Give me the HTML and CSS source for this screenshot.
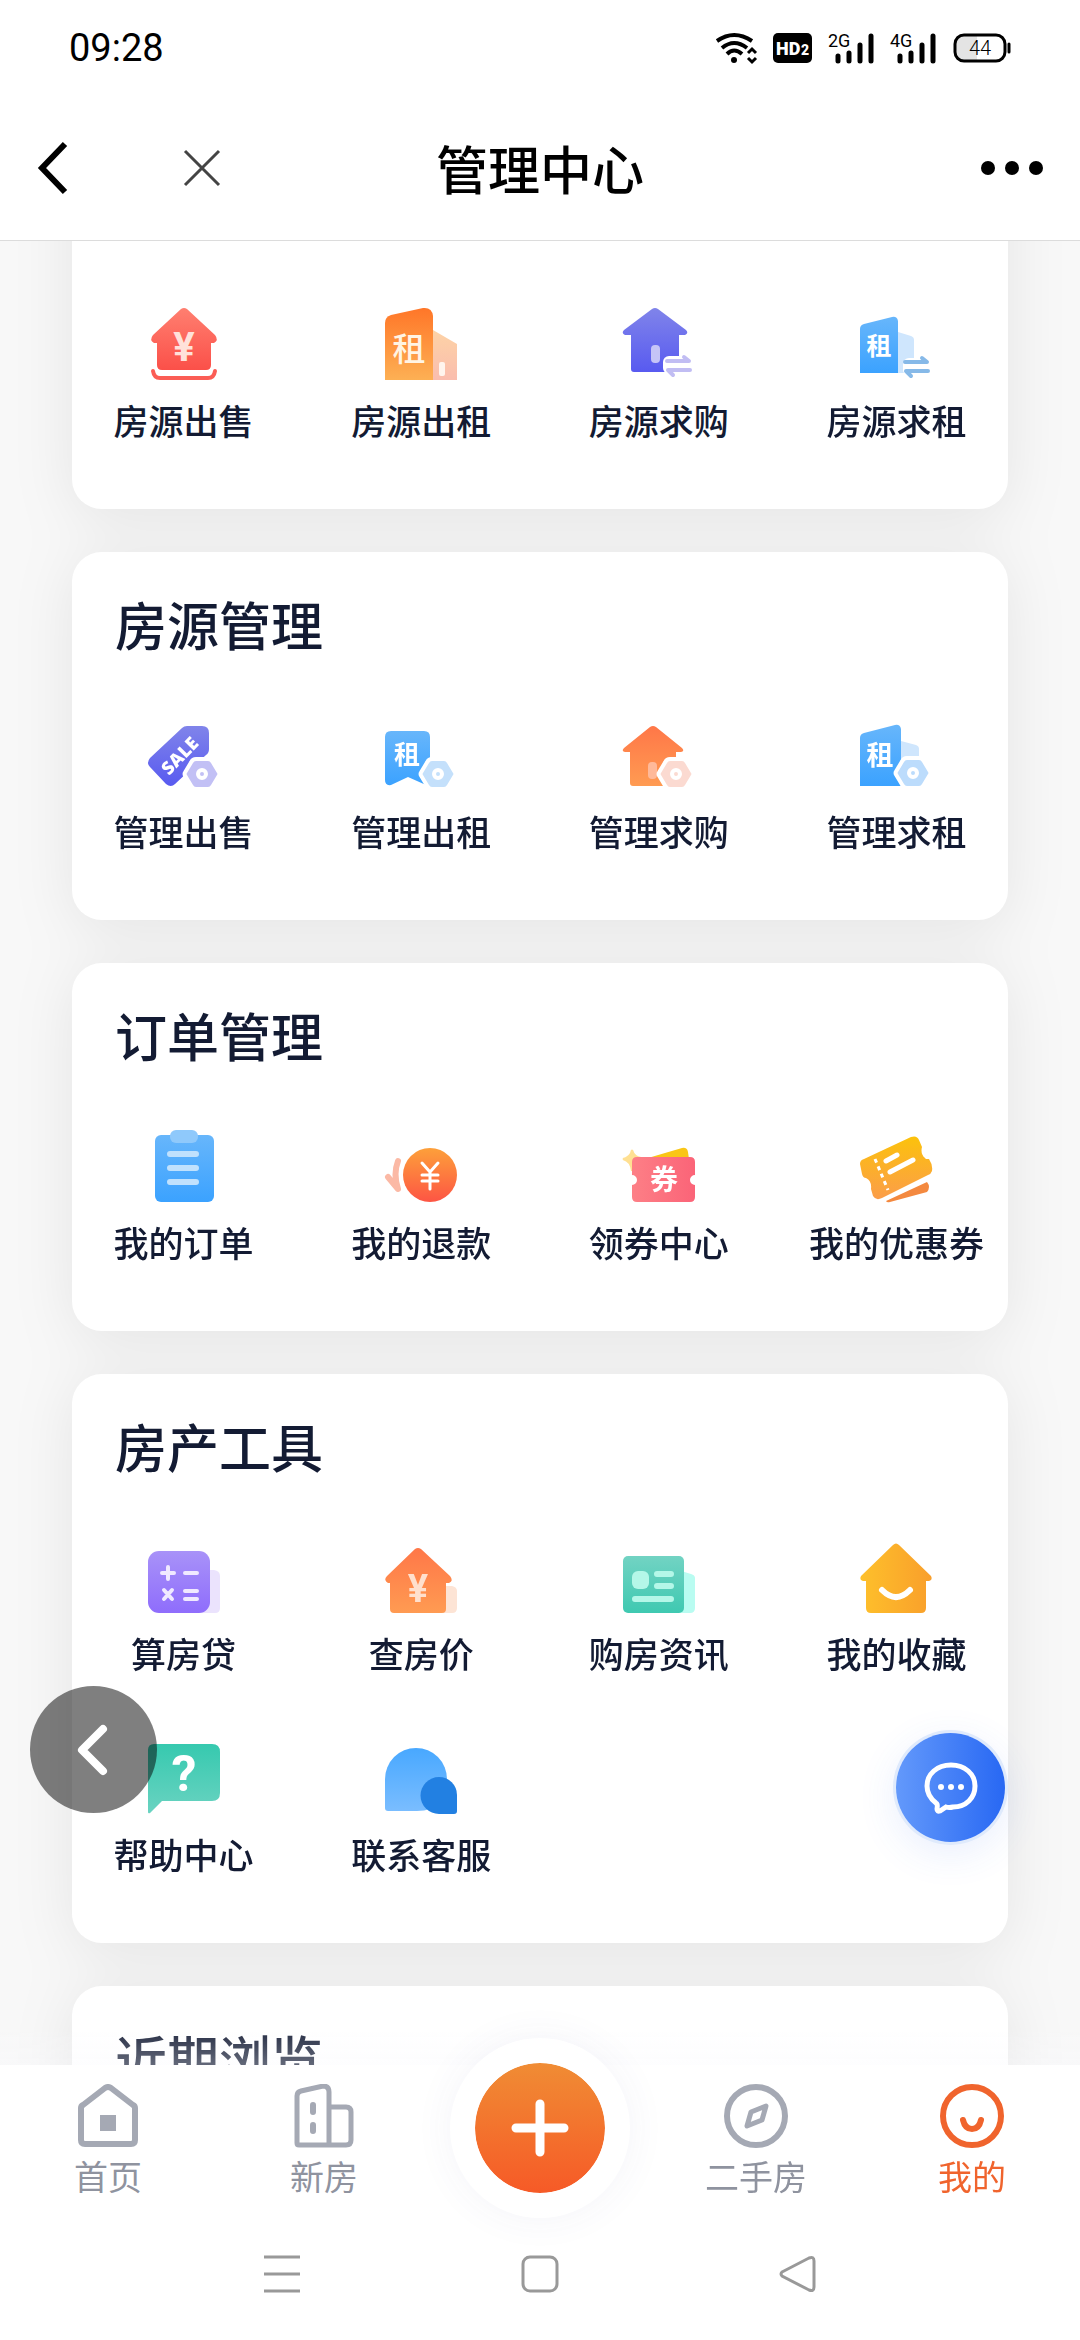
FILE: index.html
```html
<!DOCTYPE html>
<html lang="zh-CN">
<head>
  <meta charset="UTF-8">
  <title>管理中心</title>
  <meta name="viewport" content="width=device-width, initial-scale=1.0">
  <link rel="stylesheet" href="styles.css">
</head>
<body>
  <!-- Shared gradients and small icon parts -->
  <svg class="defs" aria-hidden="true">
    <defs>
      <linearGradient id="red" x2="0" y2="1"><stop stop-color="#ff7f70"/><stop offset="1" stop-color="#fb5049"/></linearGradient>
      <linearGradient id="orange" x2="0" y2="1"><stop stop-color="#ff7628"/><stop offset="1" stop-color="#fdb054"/></linearGradient>
      <linearGradient id="peach" x2="0" y2="1"><stop stop-color="#fdd3a6"/><stop offset="1" stop-color="#fabdae"/></linearGradient>
      <linearGradient id="coral" x2="0" y2="1"><stop stop-color="#ff7748"/><stop offset="1" stop-color="#ff9b52"/></linearGradient>
      <linearGradient id="coin" x2="0" y2="1"><stop stop-color="#fda03a"/><stop offset="1" stop-color="#fd5544"/></linearGradient>
      <linearGradient id="indigo" x2="0" y2="1"><stop stop-color="#8084ea"/><stop offset="1" stop-color="#585af0"/></linearGradient>
      <linearGradient id="blue" x2="0" y2="1"><stop stop-color="#67b6fb"/><stop offset="1" stop-color="#3ba2ff"/></linearGradient>
      <linearGradient id="sky" x2="0" y2="1"><stop stop-color="#48a8ff"/><stop offset="1" stop-color="#7abdff"/></linearGradient>
      <linearGradient id="violet" x2="0" y2="1"><stop stop-color="#a892f8"/><stop offset="1" stop-color="#8f6dfc"/></linearGradient>
      <linearGradient id="mint" x2="0" y2="1"><stop stop-color="#72d3c3"/><stop offset="1" stop-color="#3fc9b1"/></linearGradient>
      <linearGradient id="green" x2="0" y2="1"><stop stop-color="#36c9af"/><stop offset="1" stop-color="#6ad3c1"/></linearGradient>
      <linearGradient id="pink"><stop stop-color="#fd7f86"/><stop offset="1" stop-color="#fb6478"/></linearGradient>
      <linearGradient id="ticket" x2="0" y2="1"><stop stop-color="#fcc20b"/><stop offset="1" stop-color="#fb9d4a"/></linearGradient>
      <linearGradient id="amber"><stop stop-color="#fec02b"/><stop offset="1" stop-color="#f99f2b"/></linearGradient>
      <g id="swap">
        <path d="M2 8H24L19 4M25 17H3l5 5" fill="none" stroke-width="4" stroke-linecap="round" stroke-linejoin="round"/>
      </g>
      <g id="nut">
        <path d="M9 2h12q2 0 3 2l6 10q1 1 0 2l-6 10q-1 2-3 2H9q-2 0-3-2L0 16q-1-1 0-2L6 4q1-2 3-2z" stroke="#fff" stroke-width="8" paint-order="stroke"/>
        <circle cx="15" cy="15" r="4" stroke="#fff" stroke-width="4"/>
      </g>
    </defs>
  </svg>

  <div class="app">
    <div class="status-bar">
      <span class="time">09:28</span>
      <div class="status-icons">
        <svg width="40" height="30" viewBox="0 0 40 30">
          <g fill="none" stroke="#000" stroke-width="4">
            <path d="M1 8Q18-4 36 8"/><path d="M6 15Q18 5 31 15"/><path d="M11 21Q18 14 26 21"/>
            <path d="M32 20l4-4 4 4M32 25l4 4 4-4" stroke-width="3"/>
          </g>
          <circle cx="18" cy="27" r="3"/>
        </svg>
        <svg width="39" height="30" viewBox="0 0 39 30">
          <rect width="39" height="30" rx="5"/>
          <text x="3" y="22" font-size="18" class="hd">HD</text><text x="28" y="22" font-size="14" class="hd">2</text>
        </svg>
        <svg width="45" height="30" viewBox="0 0 45 30">
          <text x="-1" y="14" class="net">2G</text>
          <path d="M9 23v5M20 20v8M31 12v16M42 3v25" stroke="#000" stroke-width="5" stroke-linecap="round"/>
        </svg>
        <svg width="45" height="30" viewBox="0 0 45 30">
          <text x="-1" y="14" class="net">4G</text>
          <path d="M9 23v5M20 20v8M31 12v16M42 3v25" stroke="#000" stroke-width="5" stroke-linecap="round"/>
        </svg>
        <svg width="58" height="30" viewBox="0 0 58 30">
          <path d="M10 2h14v26H10q-8 0-8-8V10q0-8 8-8z" fill="#e4e4e4"/>
          <rect x="2" y="2" width="50" height="26" rx="9" fill="none" stroke="#000" stroke-width="3"/>
          <path d="M56 11v8" stroke="#000" stroke-width="3" stroke-linecap="round"/>
          <text x="27" y="22" text-anchor="middle" class="level">44</text>
        </svg>
      </div>
    </div>

    <header class="nav-bar">
      <div class="nav-left">
        <button type="button" aria-label="返回">
          <svg width="32" height="54" viewBox="0 0 32 54"><path d="M29 3L6 27l23 24" fill="none" stroke="#000" stroke-width="6"/></svg>
        </button>
        <button type="button" aria-label="关闭">
          <svg width="38" height="38" viewBox="0 0 38 38"><path d="M2 2l34 34M36 2L2 36" fill="none" stroke="#444" stroke-width="3"/></svg>
        </button>
      </div>
      <h1>管理中心</h1>
      <button type="button" class="more" aria-label="更多">
        <svg width="64" height="16" viewBox="0 0 64 16"><circle cx="8" cy="8" r="7"/><circle cx="32" cy="8" r="7"/><circle cx="56" cy="8" r="7"/></svg>
      </button>
    </header>

    <main class="feed" id="feed">
      <div class="cards">
        <section class="card">
          <h2>房源发布</h2>
          <div class="grid">
            <a href="#" class="item">
              <svg class="icon" viewBox="0 0 72 72">
                <path d="M33 1q3-2 6 0l28 26q4 5-1 8h-3v22q0 5-5 5H14q-5 0-5-5V35H6q-5-3-1-8z" fill="url(#red)"/>
                <path d="M5 63q1 7 7 7h48q6 0 7-7" fill="none" stroke="#fb5d55" stroke-width="4" stroke-linecap="round"/>
                <text x="36" y="53" font-size="40" class="yen" fill="#ffe1da">¥</text>
              </svg>
              <span>房源出售</span>
            </a>
            <a href="#" class="item">
              <svg class="icon" viewBox="0 0 72 72">
                <path d="M48 22l24 14v36H48z" fill="url(#peach)"/>
                <rect x="54" y="54" width="6" height="14" rx="2" fill="#fff5ee"/>
                <path d="M0 15q0-6 6-8l32-7q9-1 10 8v64H0z" fill="url(#orange)"/>
                <text x="24" y="53" font-size="33" class="zh" fill="#fff4e4">租</text>
              </svg>
              <span>房源出租</span>
            </a>
            <a href="#" class="item">
              <svg class="icon" viewBox="0 0 72 72">
                <path d="M29 1q3-2 6 0l28 21q3 3-1 5h-6v34q0 3-3 3H11q-3 0-3-3V27H2q-4-2-1-5z" fill="url(#indigo)"/>
                <rect x="28" y="37" width="9" height="18" rx="4" fill="#c5c4f7"/>
                <rect x="40" y="48" width="22" height="18" rx="6" fill="#fff"/>
                <use href="#swap" x="42" y="45" stroke="#c1bdf3"/>
              </svg>
              <span>房源求购</span>
            </a>
            <a href="#" class="item">
              <svg class="icon" viewBox="0 0 72 72">
                <path d="M38 24l13 4q3 1 3 4v33H38z" fill="#cfe6fd"/>
                <path d="M0 21q0-4 4-5l28-7q5-1 6 4v52H0z" fill="url(#blue)"/>
                <rect x="43" y="50" width="20" height="18" rx="6" fill="#fff"/>
                <use href="#swap" x="43" y="46" stroke="#86b9e8"/>
                <text x="19" y="47" font-size="25" class="zh bold" fill="#fff">租</text>
              </svg>
              <span>房源求租</span>
            </a>
          </div>
        </section>

        <section class="card">
          <h2>房源管理</h2>
          <div class="grid">
            <a href="#" class="item">
              <svg class="icon" viewBox="0 0 72 72">
                <path d="M34 9q2-2 5-2h15q7 0 7 7v16q0 4-3 6L27 65q-4 4-9 0L2 48q-4-4 0-9z" fill="url(#indigo)"/>
                <text x="32" y="43" font-size="18" class="sale" transform="rotate(-46 32 37)">SALE</text>
                <use href="#nut" x="39" y="40" fill="#c2c0f5"/>
              </svg>
              <span>管理出售</span>
            </a>
            <a href="#" class="item">
              <svg class="icon" viewBox="0 0 72 72">
                <path d="M6 12h33q6 0 6 6v46q0 4-4 2l-18-8-17 8q-6 1-6-5V18q0-6 6-6z" fill="url(#blue)"/>
                <text x="22" y="45" font-size="26" class="zh bold" fill="#fff">租</text>
                <use href="#nut" x="38" y="40" fill="#c4e0fb"/>
              </svg>
              <span>管理出租</span>
            </a>
            <a href="#" class="item">
              <svg class="icon" viewBox="0 0 72 72">
                <path d="M27 8q3-2 6 0l26 21q3 3-1 4h-5v31q0 3-3 3H10q-3 0-3-3V33H2q-4-1-1-4z" fill="url(#coral)"/>
                <rect x="25" y="43" width="9" height="17" rx="4" fill="#ffb999"/>
                <use href="#nut" x="38" y="40" fill="#fbdad1"/>
              </svg>
              <span>管理求购</span>
            </a>
            <a href="#" class="item">
              <svg class="icon" viewBox="0 0 72 72">
                <path d="M41 22l15 4q3 1 3 4v12H41z" fill="#cfe6fd"/>
                <path d="M0 19q0-4 4-5l31-8q5-1 6 4v57H0z" fill="url(#blue)"/>
                <text x="20" y="46" font-size="27" class="zh bold" fill="#fff">租</text>
                <use href="#nut" x="38" y="39" fill="#bcdcfc"/>
              </svg>
              <span>管理求租</span>
            </a>
          </div>
        </section>

        <section class="card">
          <h2>订单管理</h2>
          <div class="grid">
            <a href="#" class="item">
              <svg class="icon" viewBox="0 0 72 72">
                <rect x="7" y="5" width="59" height="67" rx="6" fill="url(#blue)"/>
                <rect x="22" y="0" width="28" height="13" rx="6" fill="#8fc9fb"/>
                <path d="M22 24h26M22 38h26M22 52h26" stroke="#c0e1fd" stroke-width="6" stroke-linecap="round"/>
              </svg>
              <span>我的订单</span>
            </a>
            <a href="#" class="item">
              <svg class="icon" viewBox="0 0 72 72">
                <circle cx="45" cy="45" r="27" fill="url(#coin)"/>
                <path d="M13 31q-5 13 0 28L3 47" fill="none" stroke="#fbb9a5" stroke-width="6" stroke-linecap="round" stroke-linejoin="round"/>
                <path d="M37 33l8 9 8-9M45 42v17M37 45h16M37 51h16" fill="none" stroke="#fff" stroke-width="3" stroke-linecap="round"/>
              </svg>
              <span>我的退款</span>
            </a>
            <a href="#" class="item">
              <svg class="icon" viewBox="0 0 72 72">
                <path d="M9 20q2 7 9 8-6 3-9 13Q8 31 0 29q8-2 9-9z" fill="#ffe092" stroke="#ffe092" stroke-width="2"/>
                <path d="M25 28l34-10q5-1 6 4l1 7z" fill="#fac616"/>
                <path d="M14 27h53q5 0 5 5v13a5 5 0 0 0 0 10v12q0 5-5 5H14q-5 0-5-5V55a5 5 0 0 0 0-10V32q0-5 5-5z" fill="url(#pink)"/>
                <text x="41" y="60" font-size="28" class="zh bold" fill="#fff">券</text>
              </svg>
              <span>领券中心</span>
            </a>
            <a href="#" class="item">
              <svg class="icon" viewBox="0 0 72 72">
                <path d="M26 71l41-19q4 5 0 10l-37 10q-3 1-4-1z" fill="#f4893f"/>
                <path d="M4 29L51 7q6-2 8 3l3 7q-2 7 4 12h3q4 6 3 12-1 3-4 4L22 68q-6 3-9-2l-2-7q1-8-5-11-3 0-4-4L0 34q0-4 4-5z" fill="url(#ticket)" stroke="#fff" stroke-width="3" paint-order="stroke"/>
                <path d="M26 31l11-6M30 42l23-12" stroke="#fff" stroke-width="5" stroke-linecap="round"/>
                <path d="M15 29l13 31" stroke="#fff" stroke-width="3" stroke-dasharray="4 4"/>
              </svg>
              <span>我的优惠券</span>
            </a>
          </div>
        </section>

        <section class="card">
          <h2>房产工具</h2>
          <div class="grid">
            <a href="#" class="item">
              <svg class="icon" viewBox="0 0 72 72">
                <path d="M50 29h16q6 1 6 6v32q0 5-5 5H50z" fill="#ebe3fd"/>
                <rect y="10" width="62" height="62" rx="11" fill="url(#violet)"/>
                <path d="M14 32h12M20 26v12M37 32h12M16 49l8 9M24 49l-8 9M37 50h12M37 58h12" stroke="#f0e9ff" stroke-width="4" stroke-linecap="round"/>
              </svg>
              <span>算房贷</span>
            </a>
            <a href="#" class="item">
              <svg class="icon" viewBox="0 0 72 72">
                <path d="M58 45h9q5 1 5 5v17q0 5-5 5h-9z" fill="#fde4d5"/>
                <path d="M30 8q3-2 6 0l29 27q4 5-1 7h-3v26q0 4-4 4H9q-4 0-4-4V42H3q-5-3-1-7z" fill="url(#coral)"/>
                <text x="33" y="61" font-size="38" class="yen" fill="#ffe0cd">¥</text>
              </svg>
              <span>查房价</span>
            </a>
            <a href="#" class="item">
              <svg class="icon" viewBox="0 0 72 72">
                <path d="M55 29l13 4q4 1 4 4v30q0 5-5 5H55z" fill="#b9fcf1"/>
                <rect y="15" width="61" height="57" rx="5" fill="url(#mint)"/>
                <rect x="9" y="30" width="17" height="18" rx="6" fill="#b4f7e8"/>
                <path d="M34 33h14M34 45h14M12 58h36" stroke="#b4f7e8" stroke-width="6" stroke-linecap="round"/>
              </svg>
              <span>购房资讯</span>
            </a>
            <a href="#" class="item">
              <svg class="icon" viewBox="0 0 72 72">
                <path d="M33 4q3-3 6 0l32 31q2 4-2 5h-3v27q0 5-5 5H11q-5 0-5-5V40H3q-4-1-2-5z" fill="url(#amber)"/>
                <path d="M22 49q14 14 28 0" fill="none" stroke="#fff" stroke-width="6" stroke-linecap="round"/>
              </svg>
              <span>我的收藏</span>
            </a>
            <a href="#" class="item">
              <svg class="icon" viewBox="0 0 72 72">
                <path d="M6 2h58q8 0 8 8v41q0 8-8 8H14L2 71q-2 1-2-1V8q0-6 6-6z" fill="url(#green)"/>
                <text x="36" y="49" font-size="50" class="yen" fill="#fff">?</text>
              </svg>
              <span>帮助中心</span>
            </a>
            <a href="#" class="item">
              <svg class="icon" viewBox="0 0 72 72">
                <path d="M31 6a31 31 0 0 1 31 31q0 32-30 32H3q-3 0-3-3V37A31 31 0 0 1 31 6z" fill="url(#sky)"/>
                <path d="M54 35a18 18 0 0 1 18 18v16q0 3-3 3H54a18 18 0 0 1 0-37z" fill="#2280e2"/>
              </svg>
              <span>联系客服</span>
            </a>
          </div>
        </section>

        <section class="card">
          <h2>近期浏览</h2>
          <div class="grid"></div>
        </section>
      </div>
    </main>

    <button type="button" class="float-back" aria-label="返回上一页">
      <svg width="40" height="56" viewBox="0 0 40 56"><path d="M29 7L8 28l21 21" fill="none" stroke="#fff" stroke-width="8" stroke-linecap="round" stroke-linejoin="round"/></svg>
    </button>
    <button type="button" class="float-chat" aria-label="在线咨询">
      <svg width="54" height="54" viewBox="0 0 54 54">
        <path d="M27 4C13 4 3 13 3 25q0 10 9 17 2 1 1 6 0 3 3 2l6-4q3 1 7 0c13 0 22-9 22-21S41 4 27 4z" fill="none" stroke="#fff" stroke-width="5"/>
        <g fill="#fff"><circle cx="17" cy="26" r="3"/><circle cx="27" cy="26" r="3"/><circle cx="37" cy="26" r="3"/></g>
      </svg>
    </button>

    <nav class="tab-bar">
      <a href="#" class="tab">
        <svg viewBox="0 0 64 64" class="tab-icon">
          <path d="M5 24q0-2 2-3L29 4q3-2 6 0l22 17q2 1 2 3v32q0 4-4 4H9q-4 0-4-4z" fill="none" stroke="currentColor" stroke-width="6" stroke-linejoin="round"/>
          <path d="M24 31h16v16H24z" fill="currentColor"/>
        </svg>
        <span>首页</span>
      </a>
      <a href="#" class="tab">
        <svg viewBox="0 0 64 64" class="tab-icon">
          <g fill="none" stroke="currentColor" stroke-width="5">
            <path d="M37 61H7q-2 0-2-2V12q0-4 4-5l22-5q6 0 6 6zM37 23h17q5 0 5 5v28q0 5-5 5H37"/>
            <path d="M21 21v7M21 41v6" stroke-width="6" stroke-linecap="round"/>
          </g>
        </svg>
        <span>新房</span>
      </a>
      <div class="tab">
        <button type="button" class="publish" aria-label="发布">
          <svg width="60" height="60" viewBox="0 0 60 60"><path d="M30 6v48M6 30h48" stroke="#fff" stroke-width="9" stroke-linecap="round"/></svg>
        </button>
      </div>
      <a href="#" class="tab">
        <svg viewBox="0 0 64 64" class="tab-icon">
          <g fill="none" stroke="currentColor" stroke-linejoin="round">
            <circle cx="32" cy="32" r="29" stroke-width="6"/>
            <path d="M42 22l-4 14-15 6 4-14z" stroke-width="5"/>
          </g>
        </svg>
        <span>二手房</span>
      </a>
      <a href="#" class="tab active">
        <svg viewBox="0 0 64 64" class="tab-icon">
          <g fill="none" stroke="currentColor" stroke-width="6" stroke-linecap="round">
            <circle cx="32" cy="32" r="29"/>
            <path d="M23 36q2 9 9 9t9-9"/>
          </g>
        </svg>
        <span>我的</span>
      </a>
    </nav>

    <div class="system-nav">
      <button type="button" aria-label="最近任务">
        <svg width="38" height="38" viewBox="0 0 38 38"><path d="M1 2h36M1 19h36M1 36h36" stroke="#999" stroke-width="3"/></svg>
      </button>
      <button type="button" aria-label="主屏幕">
        <svg width="38" height="38" viewBox="0 0 38 38"><rect x="2" y="2" width="34" height="34" rx="7" fill="none" stroke="#999" stroke-width="3"/></svg>
      </button>
      <button type="button" aria-label="系统返回">
        <svg width="38" height="38" viewBox="0 0 38 38"><path d="M3 17L30 3q5-2 5 3v26q0 5-5 3L3 21q-2-2 0-4z" fill="none" stroke="#999" stroke-width="3"/></svg>
      </button>
    </div>
  </div>

  <script>
    document.getElementById('feed').scrollTop = 100;
  </script>
</body>
</html>
```
FILE: styles.css
```css
* {
  box-sizing: border-box;
}

body {
  font-family: 'Noto Sans CJK SC', 'Noto Sans', sans-serif;
  background: #fff;
  color: #131b33;
  margin: 0;
}

a {
  color: inherit;
  text-decoration: none;
}

button {
  background: none;
  border: none;
  padding: 0;
  cursor: pointer;
}

svg {
  display: block;
}

.defs {
  position: absolute;
  width: 0;
  height: 0;
}

.app {
  position: relative;
  display: flex;
  flex-direction: column;
  height: 100vh;
}

/* Status bar */
.status-bar {
  display: flex;
  justify-content: space-between;
  align-items: center;
  height: 96px;
  padding: 0 69px;
  flex-shrink: 0;
  color: #000;
}

.time {
  font-family: Roboto, sans-serif;
  font-size: 38px;
}

.status-icons {
  display: flex;
  gap: 17px;
}

.status-icons svg {
  overflow: visible;
}

.hd {
  font-family: Roboto, sans-serif;
  font-weight: 900;
  fill: #fff;
}

.net {
  font-family: Roboto, sans-serif;
  font-size: 18px;
}

.level {
  font-family: Roboto, sans-serif;
  font-size: 20px;
  font-weight: 300;
}

/* Title bar */
.nav-bar {
  display: grid;
  grid-template-columns: 1fr auto 1fr;
  align-items: center;
  height: 145px;
  padding: 0 36px;
  border-bottom: 1px solid #dcdcdc;
  flex-shrink: 0;
}

.nav-left {
  display: flex;
  align-items: center;
  gap: 115px;
}

.nav-bar h1 {
  margin: 0;
  font-size: 52px;
  font-weight: 500;
  line-height: 60px;
  color: #000;
}

.more {
  justify-self: end;
}

/* Card list */
.feed {
  flex: 1;
  min-height: 0;
  overflow-y: auto;
  scrollbar-width: none;
  background: #f8f8f8;
}

.cards {
  display: flex;
  flex-direction: column;
  gap: 43px;
  padding: 0 72px 43px;
  filter: drop-shadow(0 8px 30px rgba(0, 0, 0, 0.08));
}

.card {
  background: #fff;
  border-radius: 30px;
  padding: 42px 43px 65px;
}

.card h2 {
  margin: 0 0 65px;
  font-size: 52px;
  font-weight: 500;
  line-height: 60px;
}

.grid {
  display: grid;
  grid-template-columns: repeat(4, 137px);
  justify-content: space-between;
  row-gap: 65px;
}

.item {
  display: flex;
  flex-direction: column;
  align-items: center;
  gap: 16px;
  font-size: 35px;
  font-weight: 500;
  line-height: 48px;
  white-space: nowrap;
}

.icon {
  width: 72px;
  height: 72px;
  overflow: visible;
}

.yen {
  font-family: Roboto, sans-serif;
  font-weight: 700;
  text-anchor: middle;
}

.zh {
  font-weight: 500;
  text-anchor: middle;
}

.zh.bold {
  font-weight: 700;
}

.sale {
  font-family: 'Open Sans', sans-serif;
  font-weight: 800;
  text-anchor: middle;
  fill: #fff;
}

/* Floating buttons */
.float-back,
.float-chat {
  position: absolute;
  display: flex;
  align-items: center;
  justify-content: center;
  border-radius: 50%;
}

.float-back {
  left: 30px;
  bottom: 527px;
  width: 127px;
  height: 127px;
  background: rgba(0, 0, 0, 0.5);
}

.float-chat {
  right: 75px;
  bottom: 498px;
  width: 109px;
  height: 109px;
  background: linear-gradient(to right, #6399fb, #2868f3);
  box-shadow: 0 0 0 3px #dfeafc, 0 10px 40px rgba(60, 110, 240, 0.12);
}

/* Bottom tabs */
.tab-bar {
  position: relative;
  display: flex;
  height: 143px;
  flex-shrink: 0;
  background: #fff;
}

.tab-bar::before {
  content: '';
  position: absolute;
  left: 0;
  right: 0;
  bottom: 100%;
  height: 33px;
  background: linear-gradient(rgba(250, 250, 253, 0.1), rgba(250, 250, 253, 0.35));
}

.tab {
  position: relative;
  flex: 1;
  display: flex;
  flex-direction: column;
  align-items: center;
  gap: 4px;
  padding-top: 19px;
  font-size: 34px;
  line-height: 48px;
  color: #8f939f;
}

.tab-icon {
  width: 64px;
  height: 64px;
  color: #a5a9b4;
}

.tab.active,
.tab.active .tab-icon {
  color: #f0642d;
}

.publish {
  position: absolute;
  top: -27px;
  display: flex;
  align-items: center;
  justify-content: center;
  width: 180px;
  height: 180px;
  border: 25px solid #fff;
  border-radius: 50%;
  background: linear-gradient(#f08c34, #f65a27) padding-box, #fff;
  box-shadow: 0 0 40px rgba(60, 70, 140, 0.06);
}

/* System navigation */
.system-nav {
  display: flex;
  justify-content: center;
  align-items: center;
  gap: 220px;
  height: 132px;
  flex-shrink: 0;
}
```
